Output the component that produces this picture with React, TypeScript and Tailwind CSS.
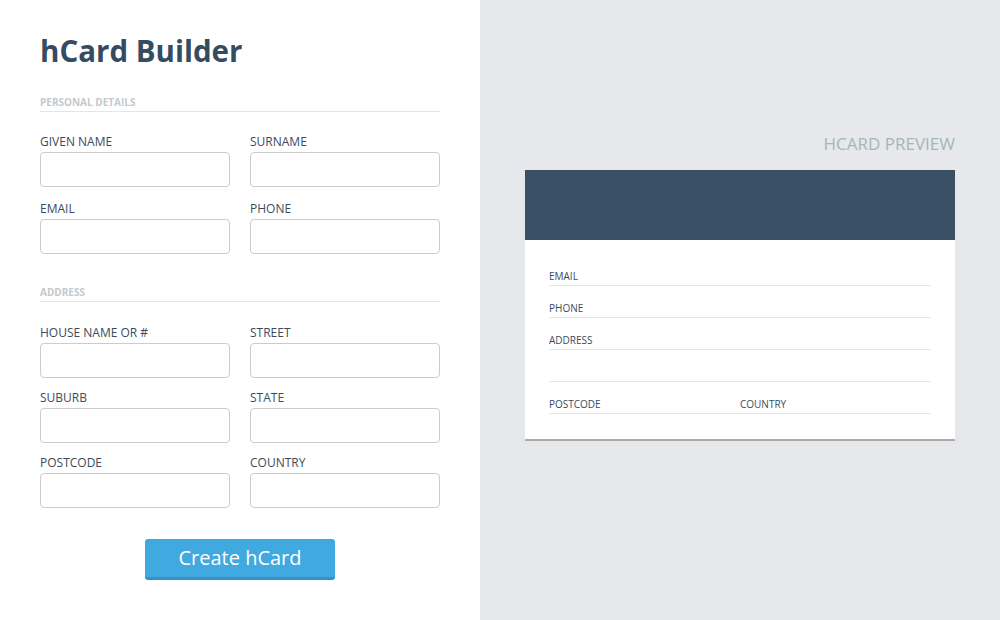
import React from 'react';

const Field: React.FC<{ label: string }> = ({ label }) => (
    <div className="flex flex-col">
        <label className="text-[12px] leading-[16px] text-[#3b4b5d] mb-[2px] uppercase">{label}</label>
        <input className="h-[35px] w-full rounded-[4px] border border-[#cccccc] bg-white px-2 text-sm outline-none" />
    </div>
);

const SectionHeading: React.FC<{ title: string }> = ({ title }) => (
    <div className="border-b border-[#e3e5e8] pb-[3px]">
        <h2 className="text-[10px] leading-[12px] font-bold text-[#c4c9ce] uppercase">{title}</h2>
    </div>
);

const PreviewRow: React.FC<{ label: string }> = ({ label }) => (
    <div className="border-b border-[#e3e5e8] pb-[3px]">
        <span className="block h-[12px] text-[10px] leading-[12px] text-[#3b4b5d]">{label}</span>
    </div>
);

export default function App() {
    return (
        <div className="flex min-h-[620px] w-[1000px] font-['Open_Sans',sans-serif]">
            {/* Builder */}
            <div className="w-[480px] bg-white px-10 pt-[33px]">
                <h1 className="text-[29.5px] leading-[36px] font-bold text-[#354b61]">hCard Builder</h1>

                <div className="mt-[27px]">
                    <SectionHeading title="Personal Details" />
                    <div className="mt-[22px] grid grid-cols-2 gap-x-5 gap-y-[14px]">
                        <Field label="Given name" />
                        <Field label="Surname" />
                        <Field label="Email" />
                        <Field label="Phone" />
                    </div>
                </div>

                <div className="mt-[32px]">
                    <SectionHeading title="Address" />
                    <div className="mt-[23px] grid grid-cols-2 gap-x-5 gap-y-[12px]">
                        <Field label="House name or #" />
                        <Field label="Street" />
                        <Field label="Suburb" />
                        <Field label="State" />
                        <Field label="Postcode" />
                        <Field label="Country" />
                    </div>
                </div>

                <div className="mt-[31px] flex justify-center">
                    <button className="h-[41px] w-[190px] rounded-[3px] border-b-[3px] border-[#3791c6] bg-[#40a9e0] text-[20px] leading-[38px] text-white">
                        Create hCard
                    </button>
                </div>
            </div>

            {/* Preview */}
            <div className="flex-1 bg-[#e7e8ec] px-[45px] pt-[133px]">
                <h2 className="text-right text-[17px] leading-[22px] text-[#a6b6b6] uppercase">hCard Preview</h2>
                <div className="mt-[15px] bg-white border-b-2 border-[#aaaaaa]">
                    <div className="h-[70px] bg-[#3a5064]" />
                    <div className="flex flex-col gap-[16px] px-6 pt-[30px] pb-[25px]">
                        <PreviewRow label="EMAIL" />
                        <PreviewRow label="PHONE" />
                        <PreviewRow label="ADDRESS" />
                        <PreviewRow label="" />
                        <div className="grid grid-cols-2">
                            <PreviewRow label="POSTCODE" />
                            <PreviewRow label="COUNTRY" />
                        </div>
                    </div>
                </div>
            </div>
        </div>
    );
}
